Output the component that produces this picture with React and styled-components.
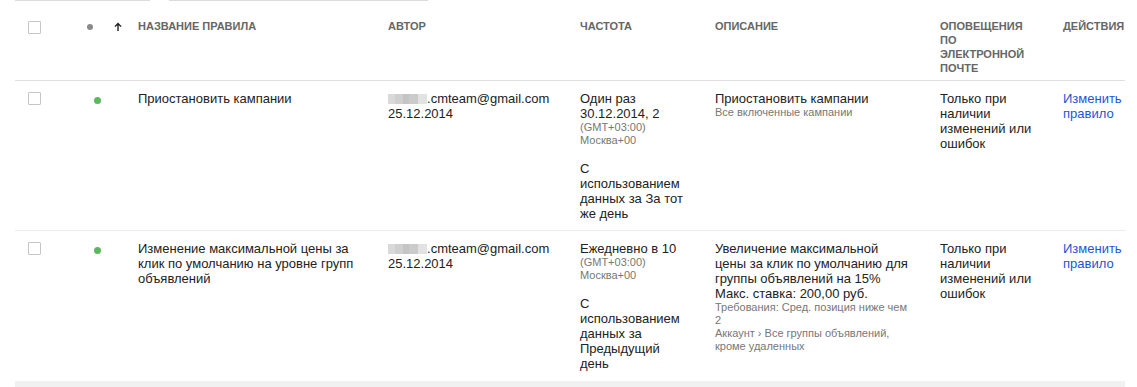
import React from "react";
import styled, { createGlobalStyle } from "styled-components";

const GlobalStyle = createGlobalStyle`
  body {
    margin: 0;
    background: #fff;
    font-family: "Liberation Sans", Arial, sans-serif;
    color: #222;
  }
`;

const COLUMNS = "65px 28px 30px 250px 192px 135px 225px 123px 62px";

const Page = styled.div`
  width: 1137px;
  height: 387px;
  overflow: hidden;
`;

const TopRule = styled.div`
  display: flex;
  height: 1px;
  margin-left: 15px;
`;

const RuleSegment = styled.div`
  width: ${(p) => p.w}px;
  margin-left: ${(p) => p.gap || 0}px;
  background: #dcdcdc;
`;

const Table = styled.div`
  width: 1110px;
  margin-left: 15px;
`;

const HeaderRow = styled.div`
  display: grid;
  grid-template-columns: ${COLUMNS};
  align-items: start;
  padding: 18px 0 5px;
  border-bottom: 1px solid #e0e0e0;
`;

const HeadCell = styled.div`
  font-size: 11px;
  line-height: 14px;
  font-weight: bold;
  color: #666;
  text-transform: uppercase;
  padding-right: ${(p) => p.pr || 0}px;
`;

const Row = styled.div`
  display: grid;
  grid-template-columns: ${COLUMNS};
  align-items: start;
  padding: 10px 0 9px;
  border-bottom: 1px solid ${(p) => (p.last ? "transparent" : "#ebebeb")};
`;

const Cell = styled.div`
  font-size: 13px;
  line-height: 15px;
  color: #222;
  padding-right: ${(p) => p.pr || 0}px;
`;

const Checkbox = styled.div`
  width: 11px;
  height: 11px;
  margin: ${(p) => p.top}px 0 0 13px;
  border: 1px solid #c6c6c6;
  border-radius: 1px;
  background: #fff;
`;

const Dot = styled.div`
  width: ${(p) => p.size}px;
  height: ${(p) => p.size}px;
  border-radius: 50%;
  background: ${(p) => p.color};
  margin: ${(p) => p.top}px 0 0 ${(p) => p.left}px;
`;

const SortArrow = styled.svg`
  display: block;
  margin: 3px 0 0 6px;
`;

const Blurred = styled.span`
  display: inline-block;
  width: 39px;
  height: 10px;
  vertical-align: -1px;
  background: linear-gradient(
    90deg,
    #d9d9d9 0 18%,
    #cfcfcf 18% 38%,
    #c4c4c4 38% 55%,
    #cbcbcb 55% 78%,
    #e2e2e2 78% 100%
  );
`;

const Small = styled.div`
  font-size: 11px;
  line-height: 13px;
  color: #777;
`;

const Spaced = styled.div`
  margin-top: 14px;
`;

const Link = styled.a`
  color: #1a55d6;
  text-decoration: none;
`;

const BottomBand = styled.div`
  height: 7px;
  background: #f1f1f1;
`;

const Author = ({ domain = "cmteam@gmail.com", date }) => (
  <>
    <div>
      <Blurred />.{domain}
    </div>
    <div>{date}</div>
  </>
);

const Actions = () => (
  <Cell>
    <Link href="#">Изменить правило</Link>
  </Cell>
);

const rows = [
  {
    name: "Приостановить кампании",
    frequency: ["Один раз", "30.12.2014, 2"],
    period: "С использованием данных за За тот же день",
    description: (
      <>
        <div>Приостановить кампании</div>
        <Small>Все включенные кампании</Small>
      </>
    ),
  },
  {
    name: "Изменение максимальной цены за клик по умолчанию на уровне групп объявлений",
    frequency: ["Ежедневно в 10"],
    period: "С использованием данных за Предыдущий день",
    description: (
      <>
        <div>
          Увеличение максимальной цены за клик по умолчанию для группы
          объявлений на 15%
        </div>
        <div>Макс. ставка: 200,00 руб.</div>
        <Small>Требования: Сред. позиция ниже чем 2</Small>
        <Small>Аккаунт › Все группы объявлений, кроме удаленных</Small>
      </>
    ),
  },
];

const App = () => {
  return (
    <Page>
      <GlobalStyle />
      <TopRule>
        <RuleSegment w={135} />
        <RuleSegment w={259} gap={19} />
      </TopRule>
      <Table>
        <HeaderRow>
          <Checkbox top={2} />
          <Dot size={6} color="#8a8a8a" top={5} left={7} />
          <SortArrow width="8" height="9" viewBox="0 0 8 9">
            <path d="M4 0.5 L7.6 4.2 L6.6 5.1 L4.7 3.2 V9 H3.3 V3.2 L1.4 5.1 L0.4 4.2 Z" fill="#222" />
          </SortArrow>
          <HeadCell pr={30}>Название правила</HeadCell>
          <HeadCell>Автор</HeadCell>
          <HeadCell>Частота</HeadCell>
          <HeadCell>Описание</HeadCell>
          <HeadCell pr={28}>Оповещения по электронной почте</HeadCell>
          <HeadCell>Действия</HeadCell>
        </HeaderRow>
        {rows.map((r, i) => (
          <Row key={i} last={i === rows.length - 1}>
            <Checkbox top={1} />
            <Dot size={7} color="#5cb85c" top={6} left={14} />
            <div />
            <Cell pr={30}>{r.name}</Cell>
            <Cell>
              <Author date="25.12.2014" />
            </Cell>
            <Cell pr={25}>
              {r.frequency.map((f) => (
                <div key={f}>{f}</div>
              ))}
              <Small>(GMT+03:00)</Small>
              <Small>Москва+00</Small>
              <Spaced>{r.period}</Spaced>
            </Cell>
            <Cell pr={29}>{r.description}</Cell>
            <Cell pr={28}>Только при наличии изменений или ошибок</Cell>
            <Actions />
          </Row>
        ))}
        <BottomBand />
      </Table>
    </Page>
  );
};

export default App;
